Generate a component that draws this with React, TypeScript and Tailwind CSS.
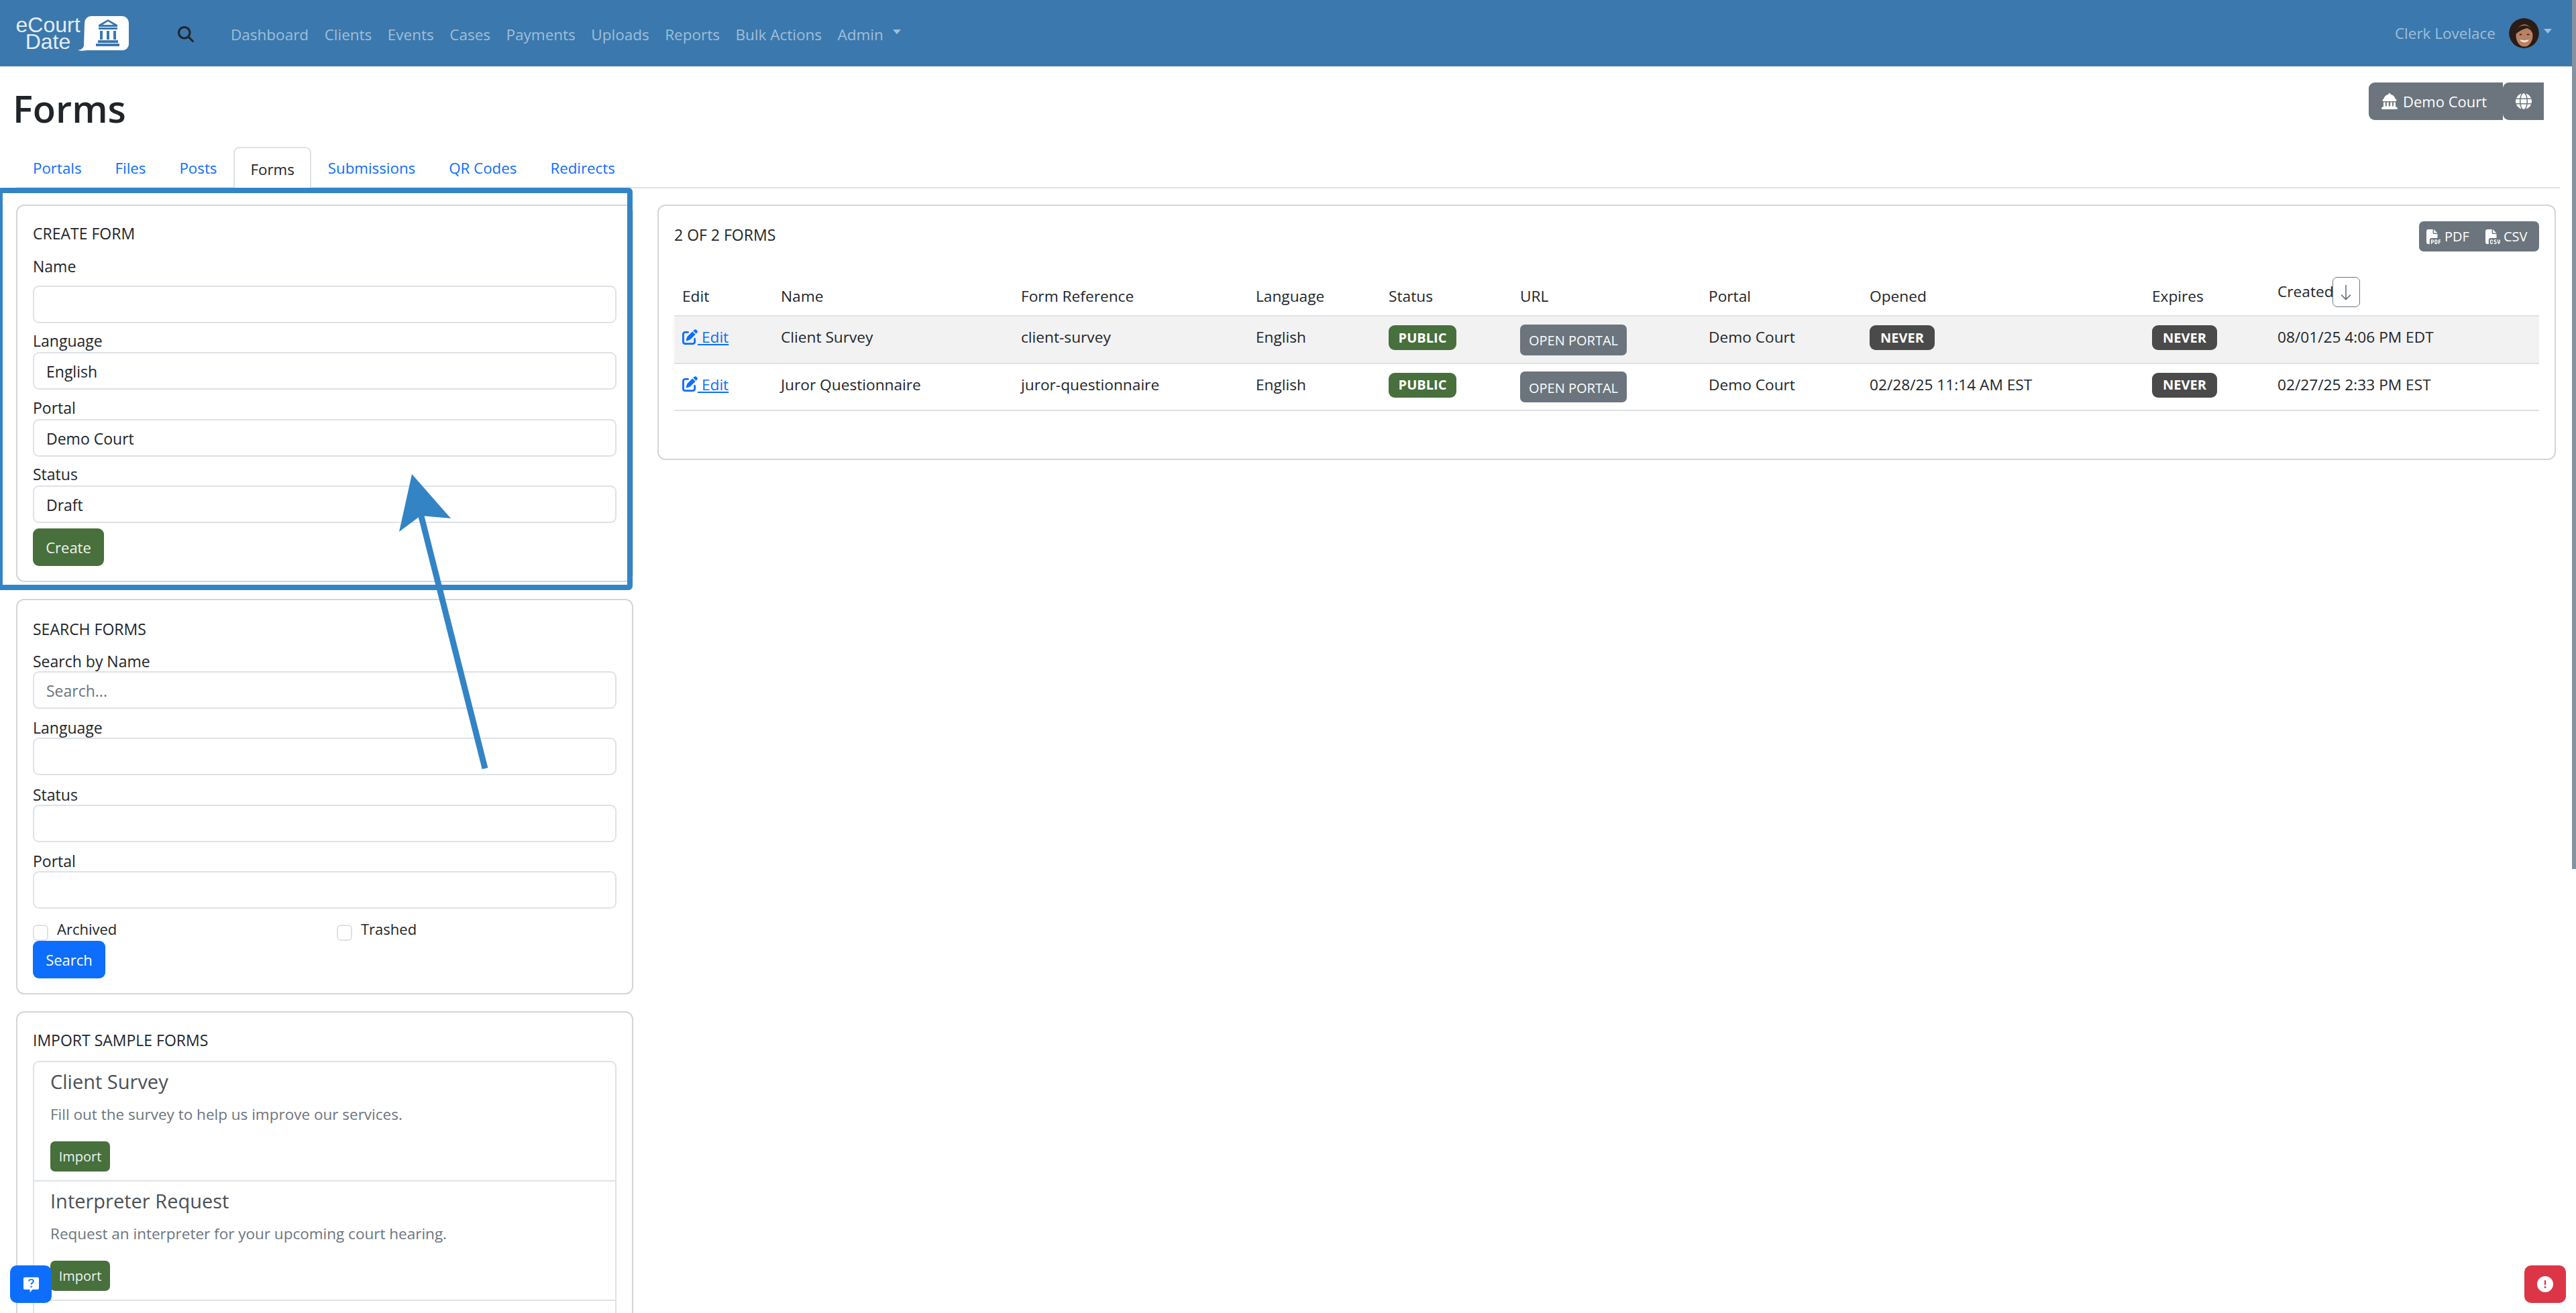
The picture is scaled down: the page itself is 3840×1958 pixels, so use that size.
import { FaMagnifyingGlass, FaLandmarkDome, FaGlobe, FaPenToSquare, FaFilePdf, FaFileCsv, FaCircleExclamation } from "react-icons/fa6";
import { BsArrowDown } from "react-icons/bs";

const navItems = ["Dashboard", "Clients", "Events", "Cases", "Payments", "Uploads", "Reports", "Bulk Actions"];
const tabs = ["Portals", "Files", "Posts", "Forms", "Submissions", "QR Codes", "Redirects"];
const columns = "grid grid-cols-[147px_358px_350px_198px_196px_281px_240px_421px_187px_402px]";

const Logo = () => (
  <div className="flex items-center">
    <div className="w-[97px] text-center text-[32px] leading-[25px] font-['Liberation_Sans',sans-serif] text-[#e4edf5]">
      <div>eCourt</div>
      <div>Date</div>
    </div>
    <svg width="76" height="52" viewBox="0 0 76 52" className="ml-[-4px]">
      <path d="M20 0h46a10 10 0 0 1 10 10v32a9 9 0 0 1-9 9H13c-4 1-9 1-13 0 5-1 8-3 9-7L10 10A10 10 0 0 1 20 0Z" fill="#fff" />
      <path d="M45 5l14 8v3H31v-3Zm0 3l-8 5h16Z" fill="#3b78ad" fillRule="evenodd" />
      <path d="M31 17h28v3H31ZM33 22h4v13h-4ZM43 22h4v13h-4ZM53 22h4v13h-4ZM30 36h30v4H30ZM27 41h35v4H27Z" fill="#3b78ad" />
    </svg>
  </div>
);

const Avatar = () => (
  <svg width="45" height="45" viewBox="0 0 45 45" className="rounded-full">
    <circle cx="22.5" cy="22.5" r="22.5" fill="#2a1c16" />
    <ellipse cx="23" cy="26" rx="12.500" ry="16.500" fill="#b98163" />
    <path d="M10 24c1-9 6-13 13-13s12 4 13 13c-2-5-5-8-9-9-5 1-12 4-17 9Z" fill="#2a1c16" />
    <path d="M16 32c4 1.500 10 1.500 14 0-2 5.500-12 5.500-14 0Z" fill="#f6ebe3" />
    <ellipse cx="17.500" cy="24.500" rx="2" ry="1.100" fill="#3a2218" />
    <ellipse cx="28.500" cy="24.500" rx="2" ry="1.100" fill="#3a2218" />
  </svg>
);

const Caret = ({ className }: { className: string }) => (
  <span className={`inline-block w-0 h-0 border-x-[6.5px] border-x-transparent border-t-[7.5px] ${className}`} />
);

const Header = () => (
  <header className="h-[99px] bg-[#3b78ad] flex items-center pl-[23px] pr-[36px] text-[22.5px]">
    <Logo />
    <FaMagnifyingGlass className="ml-[73px] mt-[2px] w-[24px] h-[24px] text-[#212529]" />
    <nav className="ml-[55px] flex items-center gap-[23.5px] text-[#a0bfd9] mt-[4px]">
      {navItems.map(item => <span key={item}>{item}</span>)}
      <span className="flex items-center">
        Admin
        <Caret className="ml-[14px] mb-[8px] border-t-[#a0bfd9]" />
      </span>
    </nav>
    <div className="ml-auto flex items-center text-[#a0bfd9]">
      <span>Clerk Lovelace</span>
      <span className="ml-[20px]"><Avatar /></span>
      <Caret className="ml-[7px] mb-[6px] border-t-[#a0bfd9]" />
    </div>
  </header>
);

const TitleRow = () => (
  <div className="h-[120px] flex items-start justify-between pl-[19px] pr-[48px]">
    <h1 className="text-[56px] font-semibold leading-none text-[#212529] mt-[34px]">Forms</h1>
    <div className="mt-[24px] flex h-[56px] text-white text-[22px]">
      <div className="flex items-center gap-[8px] w-[200px] pl-[19px] bg-[#6c757d] rounded-l-[9px]">
        <FaLandmarkDome className="w-[24px] h-[24px]" />
        Demo Court
      </div>
      <div className="flex items-center justify-center w-[61px] bg-[#6c757d] rounded-l-[9px]">
        <FaGlobe className="w-[24px] h-[24px]" />
      </div>
    </div>
  </div>
);

const Tabs = () => (
  <div className="mx-[24px] h-[62px] border-b-2 border-[#dee2e6] flex text-[22.3px] text-[#0d6efd]">
    {tabs.map(tab => tab === "Forms"
      ? <div key={tab} className="h-[62px] px-[23px] pt-[3px] flex items-center border-2 border-b-0 border-[#dee2e6] rounded-t-[9px] bg-white text-[#212529]">{tab}</div>
      : <div key={tab} className="h-[60px] px-[25px] pt-[3px] flex items-center">{tab}</div>)}
  </div>
);

const Label = ({ children, className = "" }: { children: string; className?: string }) => (
  <div className={`h-[30px] leading-[26px] text-[23px] text-[#212529] ${className}`}>{children}</div>
);

const Field = ({ value, placeholder }: { value?: string; placeholder?: string }) => (
  <div className={`h-[56px] border-2 border-[#dee2e6] rounded-[9px] pl-[18px] pt-[2px] flex items-center text-[23px] ${placeholder ? "text-[#6c757d]" : "text-[#212529]"}`}>
    {value ?? placeholder}
  </div>
);

const Card = ({ children, className = "" }: { children: React.ReactNode; className?: string }) => (
  <div className={`border-2 border-[#d3d6d9] rounded-[12px] px-[23px] bg-white ${className}`}>{children}</div>
);

const CreateForm = () => (
  <Card className="h-[563px] pt-[28px]">
    <Label>CREATE FORM</Label>
    <Label className="mt-[19px] mb-[12px]">Name</Label>
    <Field />
    <Label className="mt-[13px]">Language</Label>
    <Field value="English" />
    <Label className="mt-[14px]">Portal</Label>
    <Field value="Demo Court" />
    <Label className="mt-[13px]">Status</Label>
    <Field value="Draft" />
    <button className="mt-[8px] h-[56px] w-[106px] rounded-[9px] bg-[#47703c] text-[#f1f5ef] text-[22px]">Create</button>
  </Card>
);

const SearchForms = () => (
  <Card className="h-[590px] pt-[28px]">
    <Label className="pt-[2px]">SEARCH FORMS</Label>
    <Label className="mt-[18px] pt-[2px]">Search by Name</Label>
    <Field placeholder="Search..." />
    <Label className="mt-[13px] pt-[2px]">Language</Label>
    <Field />
    <Label className="mt-[14px] pt-[2px]">Status</Label>
    <Field />
    <Label className="mt-[13px] pt-[2px]">Portal</Label>
    <Field />
    <div className="mt-[14px] grid grid-cols-[453px_1fr] h-[24px] text-[22px] text-[#212529]">
      {["Archived", "Trashed"].map(label => (
        <div key={label} className="flex items-center gap-[13px]">
          <span className="w-[23px] h-[24px] border-2 border-[#dee2e6] rounded-[6px]" />
          <span className="mb-[10px]">{label}</span>
        </div>
      ))}
    </div>
    <button className="mt-[10px] h-[56px] w-[108px] rounded-[9px] bg-[#0d6efd] text-white text-[22px]">Search</button>
  </Card>
);

const samples = [
  { title: "Client Survey", text: "Fill out the survey to help us improve our services." },
  { title: "Interpreter Request", text: "Request an interpreter for your upcoming court hearing." },
];

const ImportSamples = () => (
  <Card className="pt-[28px] h-[600px]">
    <Label>IMPORT SAMPLE FORMS</Label>
    <div className="mt-[14px] border-2 border-[#dee2e6] rounded-t-[9px]">
      {samples.map(item => (
        <div key={item.title} className="h-[178px] px-[24px] border-b-2 border-[#dee2e6]">
          <div className="pt-[9px] h-[59px] text-[29px] font-medium text-[#4a5056] leading-[40px]">{item.title}</div>
          <div className="text-[22.5px] leading-[30px] text-[#6c757d] mt-[4px]">{item.text}</div>
          <button className="block mt-[25px] h-[45px] w-[89px] rounded-[7px] bg-[#47703c] text-[#f1f5ef] text-[20px]">Import</button>
        </div>
      ))}
      <div className="h-[60px]" />
    </div>
  </Card>
);

const Badge = ({ children, className }: { children: string; className: string }) => (
  <span className={`inline-flex items-center justify-center h-[37px] rounded-[9px] text-white text-[20px] font-bold ${className}`}>{children}</span>
);

const rows = [
  { name: "Client Survey", ref: "client-survey", opened: "", created: "08/01/25 4:06 PM EDT" },
  { name: "Juror Questionnaire", ref: "juror-questionnaire", opened: "02/28/25 11:14 AM EST", created: "02/27/25 2:33 PM EST" },
];

const cell = "pl-[12px] mb-[6px]";

const FormsTable = () => (
  <div className="mt-[26px] text-[22.7px] text-[#212529]">
    <div className={`${columns} h-[71px] border-b-2 border-[#dee2e6] items-center`}>
      {["Edit", "Name", "Form Reference", "Language", "Status", "URL", "Portal", "Opened", "Expires"].map(col => (
        <div key={col} className="pl-[12px] mt-[14px]">{col}</div>
      ))}
      <div className="pl-[12px] flex items-center">
        <span>Created</span>
        <span className="ml-[-2px] w-[41px] h-[45px] border-[1.5px] border-[#6c757d] rounded-[7px] flex items-center justify-center">
          <BsArrowDown className="w-[26px] h-[26px] text-[#6c757d]" />
        </span>
      </div>
    </div>
    {rows.map((row, i) => (
      <div key={row.name} className={`${columns} border-b-2 border-[#dee2e6] items-center ${i === 0 ? "h-[71px] bg-[#f2f2f2]" : "h-[70px]"}`}>
        <div className={`${cell} flex items-center text-[#0d6efd] underline`}>
          <FaPenToSquare className="w-[23px] h-[23px] mb-[2px]" />
          <span>&nbsp;Edit</span>
        </div>
        <div className={cell}>{row.name}</div>
        <div className={cell}>{row.ref}</div>
        <div className={cell}>English</div>
        <div className={cell}><Badge className="w-[101px] bg-[#47703c]">PUBLIC</Badge></div>
        <div className="pl-[12px]">
          <span className="inline-flex items-center justify-center w-[159px] h-[46px] rounded-[7px] bg-[#6c757d] text-white text-[20px] pt-[3px]">OPEN PORTAL</span>
        </div>
        <div className={cell}>Demo Court</div>
        <div className={cell}>{row.opened || <Badge className="w-[97px] bg-[#4a4a4a]">NEVER</Badge>}</div>
        <div className={cell}><Badge className="w-[97px] bg-[#4a4a4a]">NEVER</Badge></div>
        <div className={cell}>{row.created}</div>
      </div>
    ))}
  </div>
);

const FormsPanel = () => (
  <Card className="h-[381px] pt-[23px]">
    <div className="flex items-center justify-between">
      <span className="text-[23px] text-[#212529] mb-[4px]">2 OF 2 FORMS</span>
      <div className="flex h-[45px] w-[179px] rounded-[7px] bg-[#6c757d] text-white text-[20px] items-center">
        <span className="flex items-center gap-[5px] pl-[11px] w-[88px]"><FaFilePdf className="w-[22px] h-[26px]" />PDF</span>
        <span className="flex items-center gap-[5px] pl-[11px]"><FaFileCsv className="w-[22px] h-[26px]" />CSV</span>
      </div>
    </div>
    <FormsTable />
  </Card>
);

const Annotation = () => (
  <>
    <div className="absolute left-[-4px] top-[280px] w-[947px] h-[600px] border-[8px] border-[#3384c5] rounded-[6px] pointer-events-none" />
    <svg className="absolute left-0 top-0 pointer-events-none" width="800" height="1200" viewBox="0 0 800 1200">
      <line x1="723" y1="1146" x2="627" y2="766" stroke="#3384c5" strokeWidth="9" />
      <path d="M614 707L672 773L627 769L595 793Z" fill="#3384c5" />
    </svg>
  </>
);

export default function App() {
  return (
    <div className="relative h-[1958px] overflow-hidden bg-white font-['Open_Sans',sans-serif]">
      <Header />
      <TitleRow />
      <Tabs />
      <div className="mt-[24px] pl-[24px] pr-[31px] flex gap-[36px]">
        <div className="w-[920px] shrink-0 flex flex-col gap-[25px]">
          <CreateForm />
          <SearchForms />
          <ImportSamples />
        </div>
        <div className="flex-1">
          <FormsPanel />
        </div>
      </div>
      <Annotation />
      <div className="absolute right-0 top-0 w-[6px] h-[1296px] bg-[#84939e]" />
      <div className="absolute left-[15px] top-[1887px] w-[62px] h-[56px] rounded-[10px] bg-[#0d6efd] flex items-center justify-center">
        <svg width="25" height="25" viewBox="0 0 26 30" preserveAspectRatio="none">
          <path d="M3 2h20a2 2 0 0 1 2 2v18a2 2 0 0 1-2 2h-8l-4 5v-5H3a2 2 0 0 1-2-2V4a2 2 0 0 1 2-2Z" fill="#fff" />
          <path d="M9.500 9c0-4 7-4 7 0 0 3-3.500 3-3.500 6" fill="none" stroke="#0d6efd" strokeWidth="2" />
          <circle cx="13" cy="19" r="1.400" fill="#0d6efd" />
        </svg>
      </div>
      <div className="absolute left-[3763px] top-[1887px] w-[62px] h-[56px] rounded-[10px] bg-[#dc3545] flex items-center justify-center">
        <FaCircleExclamation className="w-[24px] h-[24px] text-white" />
      </div>
    </div>
  );
}
